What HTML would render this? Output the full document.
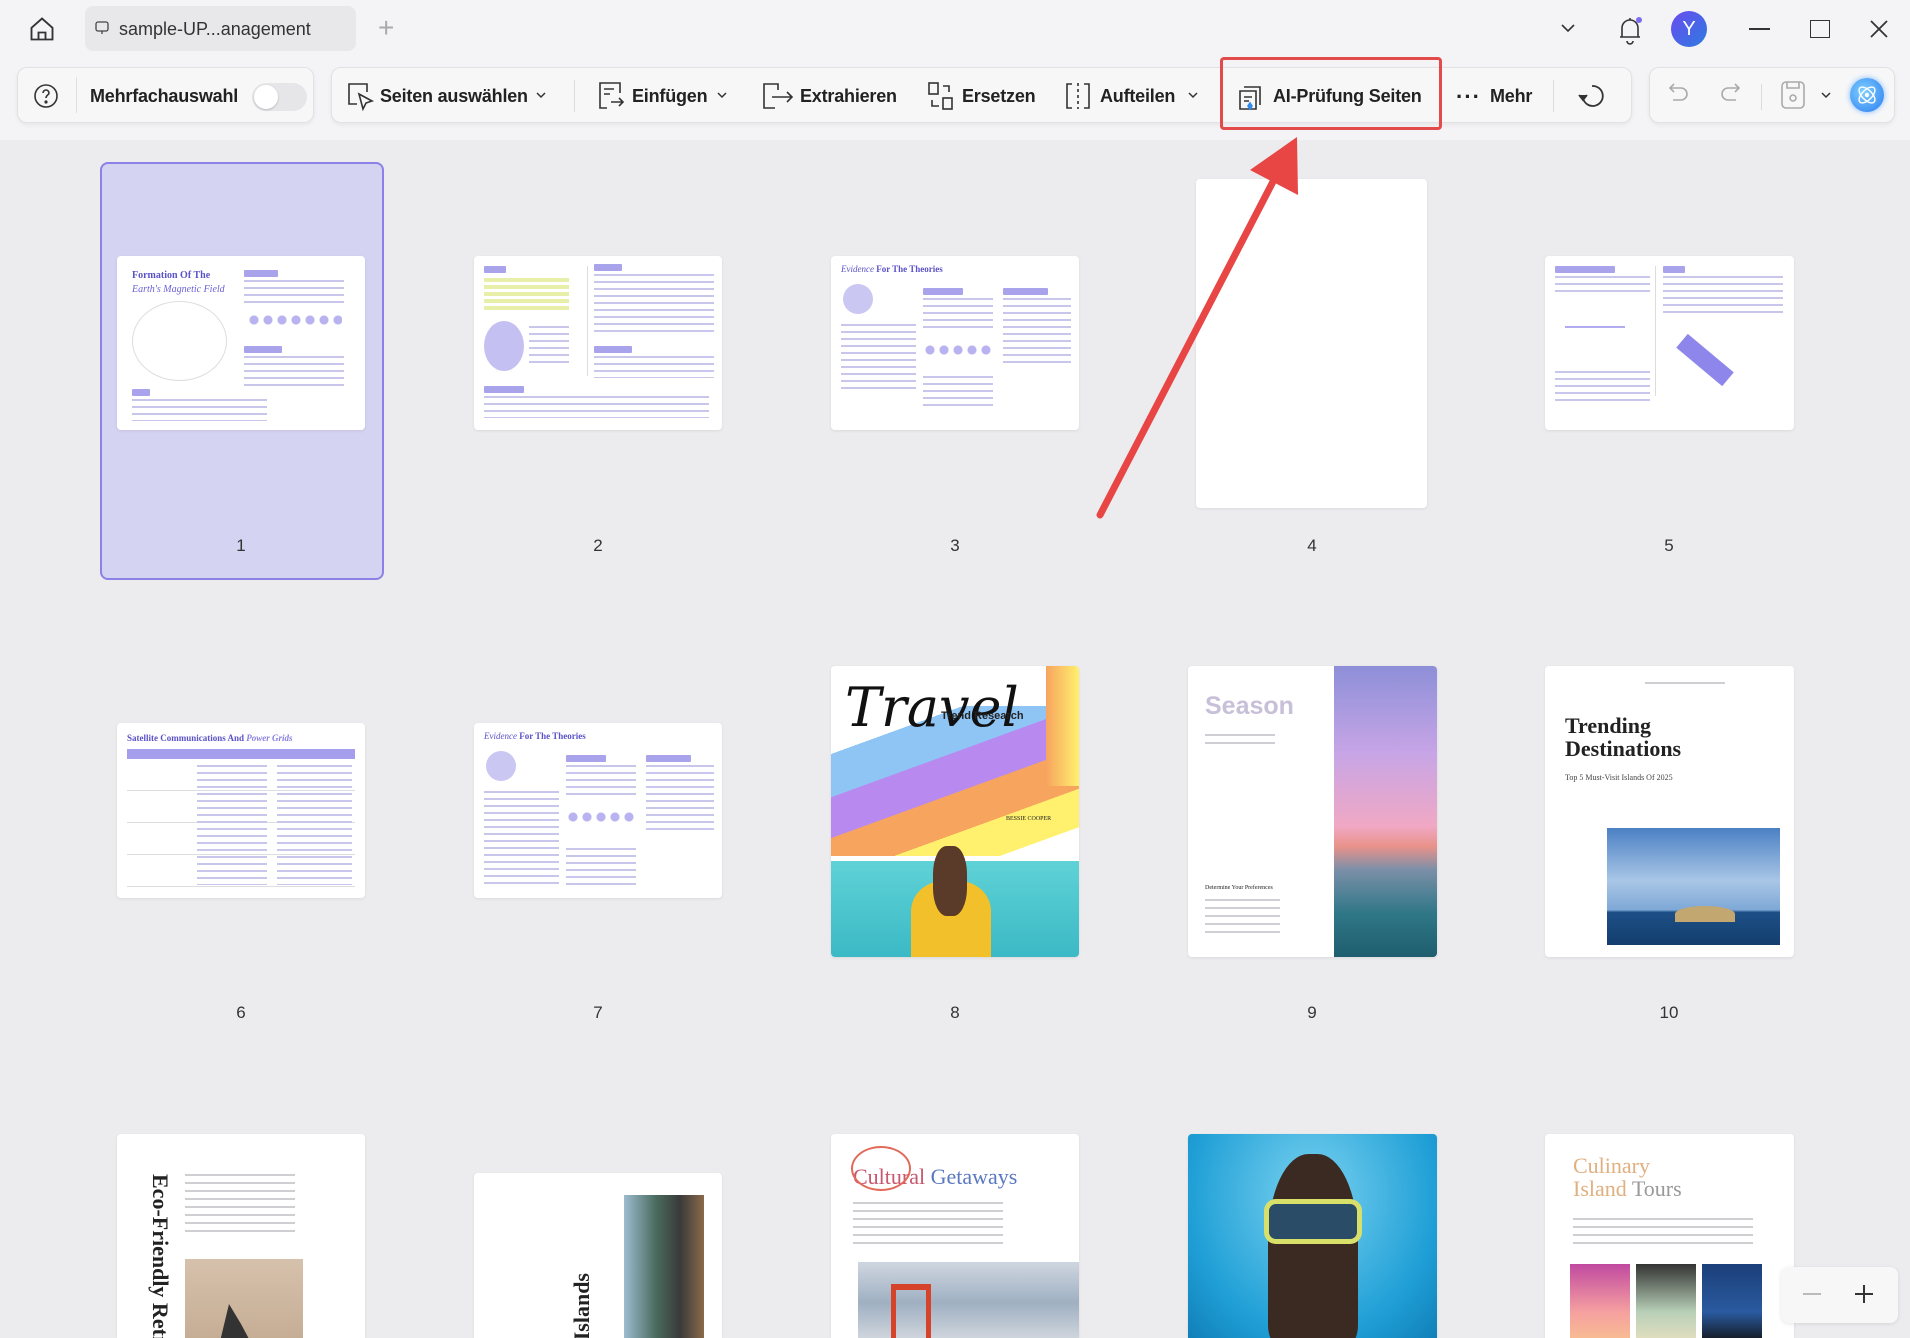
<!DOCTYPE html><html><head><meta charset="utf-8"><style>
*{box-sizing:border-box;margin:0;padding:0}
body{width:1910px;height:1338px;overflow:hidden;background:#ececee;font-family:"Liberation Sans",sans-serif;position:relative;color:#222}
.a{position:absolute}
.tb{position:absolute;top:0;left:0;width:1910px;height:140px;background:#f4f4f6}
.grp{position:absolute;top:67px;height:56px;background:#f7f7f8;border:1px solid #e2e2e5;border-radius:10px;box-shadow:0 2px 4px rgba(0,0,0,.06)}
.t{position:absolute;top:86px;font-size:18px;font-weight:bold;color:#222;white-space:nowrap;letter-spacing:-0.2px}
.ic{position:absolute;top:80px}
.pg{position:absolute;background:#fff;border-radius:4px;box-shadow:0 1px 3px rgba(0,0,0,.08);overflow:hidden}
.lbl{position:absolute;font-size:17px;color:#333;width:60px;text-align:center}
.ln{position:absolute;background:repeating-linear-gradient(#c9c6ec 0 2px,transparent 2px 7px)}
.lg{position:absolute;background:repeating-linear-gradient(#cfcfd3 0 2px,transparent 2px 8px)}
.hd{position:absolute;height:7px;background:#a9a3ec;border-radius:1px}
.se{font-family:"Liberation Serif",serif}
</style></head><body>
<div class="tb"></div>
<svg class="a" style="left:28px;top:15px" width="28" height="28" viewBox="0 0 24 24" fill="none" stroke="#333" stroke-width="1.6"><path d="M3 11L12 3l9 8v10H3z"/><path d="M9 21v-6h6v6"/></svg>
<div class="a" style="left:85px;top:6px;width:271px;height:45px;background:#e8e8eb;border-radius:8px"></div>
<svg class="a" style="left:94px;top:20px" width="16" height="16" viewBox="0 0 16 16" fill="none" stroke="#444" stroke-width="1.3"><rect x="2" y="2" width="12" height="9" rx="2"/><path d="M8 11v3"/></svg>
<div class="a" style="left:119px;top:19px;font-size:18px;color:#333">sample-UP...anagement</div>
<div class="a" style="left:378px;top:12px;font-size:28px;color:#aaa;font-weight:300">+</div>
<svg class="a" style="left:1559px;top:21px" width="18" height="14" viewBox="0 0 18 14" fill="none" stroke="#333" stroke-width="1.6"><path d="M3 4l6 6 6-6"/></svg>
<svg class="a" style="left:1615px;top:14px" width="30" height="32" viewBox="0 0 30 32" fill="none" stroke="#333" stroke-width="1.6"><path d="M7 23V14a8 8 0 0116 0v9zM5 23h20M12 27a3 3 0 006 0M15 4v2"/><circle cx="24" cy="6" r="3" fill="#7b6cf0" stroke="none"/></svg>
<div class="a" style="left:1671px;top:11px;width:36px;height:36px;border-radius:50%;background:linear-gradient(135deg,#6a4cf0,#2d7be0);color:#fff;font-size:20px;text-align:center;line-height:36px">Y</div>
<div class="a" style="left:1749px;top:28px;width:21px;height:2px;background:#333"></div>
<div class="a" style="left:1810px;top:20px;width:20px;height:18px;border:1.8px solid #333"></div>
<svg class="a" style="left:1869px;top:19px" width="20" height="20" viewBox="0 0 20 20" stroke="#333" stroke-width="1.8"><path d="M2 2l16 16M18 2L2 18"/></svg>
<div class="grp" style="left:17px;width:297px"></div>
<div class="grp" style="left:331px;width:1301px"></div>
<div class="grp" style="left:1649px;width:246px"></div>
<svg class="a" style="left:33px;top:83px" width="26" height="26" viewBox="0 0 26 26" fill="none" stroke="#333" stroke-width="1.6"><circle cx="13" cy="13" r="11"/><path d="M10 10a3 3 0 116 0c0 2-3 2-3 5"/><circle cx="13" cy="19" r=".8" fill="#333"/></svg>
<div class="a" style="left:76px;top:77px;width:1px;height:36px;background:#e0e0e3"></div>
<div class="t" style="left:90px">Mehrfachauswahl</div>
<div class="a" style="left:252px;top:83px;width:55px;height:28px;border-radius:14px;background:#e6e6e9"></div>
<div class="a" style="left:254px;top:85px;width:24px;height:24px;border-radius:50%;background:#fff;box-shadow:0 1px 2px rgba(0,0,0,.2)"></div>
<svg class="ic" style="left:345px" width="30" height="32" viewBox="0 0 30 32" fill="none" stroke="#333" stroke-width="1.6"><path d="M12 24H4V4h18v8"/><path d="M14 14l4 15 3-6 6-2z"/></svg>
<div class="t" style="left:380px">Seiten auswählen</div>
<svg class="a" style="left:535px;top:91px" width="12" height="8" viewBox="0 0 12 8" fill="none" stroke="#333" stroke-width="1.5"><path d="M2 2l4 4 4-4"/></svg>
<div class="a" style="left:574px;top:80px;width:1px;height:32px;background:#dcdcdf"></div>
<svg class="ic" style="left:597px" width="30" height="32" viewBox="0 0 30 32" fill="none" stroke="#333" stroke-width="1.6"><path d="M10 28H3V3h20v10M7 9h10M7 14h6"/><path d="M14 22h12M22 18l4 4-4 4"/></svg>
<div class="t" style="left:632px">Einfügen</div>
<svg class="a" style="left:716px;top:91px" width="12" height="8" viewBox="0 0 12 8" fill="none" stroke="#333" stroke-width="1.5"><path d="M2 2l4 4 4-4"/></svg>
<svg class="ic" style="left:761px" width="34" height="32" viewBox="0 0 34 32" fill="none" stroke="#333" stroke-width="1.6"><path d="M14 28H3V4h14v6"/><path d="M11 17h20M26 12l5 5-5 5"/></svg>
<div class="t" style="left:800px">Extrahieren</div>
<svg class="ic" style="left:926px" width="30" height="32" viewBox="0 0 30 32" fill="none" stroke="#333" stroke-width="1.6"><rect x="3" y="3" width="9" height="11"/><rect x="17" y="18" width="9" height="11"/><path d="M17 6h6v6M13 26H6v-6"/></svg>
<div class="t" style="left:962px">Ersetzen</div>
<svg class="ic" style="left:1063px" width="30" height="32" viewBox="0 0 30 32" fill="none" stroke="#333" stroke-width="1.6"><path d="M9 4H4v24h5M21 4h5v24h-5"/><path d="M15 3v26" stroke-dasharray="3 3"/></svg>
<div class="t" style="left:1100px">Aufteilen</div>
<svg class="a" style="left:1187px;top:91px" width="12" height="8" viewBox="0 0 12 8" fill="none" stroke="#333" stroke-width="1.5"><path d="M2 2l4 4 4-4"/></svg>
<svg class="ic" style="left:1236px" width="30" height="32" viewBox="0 0 30 32" fill="none" stroke="#333" stroke-width="1.6"><path d="M8 7h16v18M4 11h16v18H4z"/><path d="M8 17h8M8 21h5"/><path d="M12 26l2-3 2 3-2 3z" fill="#2f8bf0" stroke="#2f8bf0"/></svg>
<div class="t" style="left:1273px">AI-Prüfung Seiten</div>
<div class="a" style="left:1220px;top:57px;width:222px;height:73px;border:3.5px solid #e34b4b;border-radius:4px"></div>
<div class="a" style="left:1456px;top:84px;font-size:22px;font-weight:bold;letter-spacing:1px">···</div>
<div class="t" style="left:1490px">Mehr</div>
<div class="a" style="left:1553px;top:80px;width:1px;height:32px;background:#dcdcdf"></div>
<svg class="ic" style="left:1576px" width="32" height="32" viewBox="0 0 32 32" fill="none" stroke="#333" stroke-width="1.8"><path d="M7 18A10 10 0 1016 6"/><path d="M3 15l4 5 4-5" fill="#333"/></svg>
<svg class="ic" style="left:1665px" width="26" height="28" viewBox="0 0 26 28" fill="none" stroke="#aaa" stroke-width="1.6"><path d="M6 8h10a6 6 0 010 12H8M9 4L5 8l4 4"/></svg>
<svg class="ic" style="left:1718px" width="26" height="28" viewBox="0 0 26 28" fill="none" stroke="#aaa" stroke-width="1.6"><path d="M20 8H10a6 6 0 000 12h8M17 4l4 4-4 4"/></svg>
<div class="a" style="left:1761px;top:84px;width:1px;height:26px;background:#dcdcdf"></div>
<svg class="ic" style="left:1780px" width="26" height="30" viewBox="0 0 26 30" fill="none" stroke="#aaa" stroke-width="1.6"><rect x="2" y="2" width="22" height="26" rx="4"/><path d="M7 2v6h12V2"/><circle cx="13" cy="18" r="3"/></svg>
<svg class="a" style="left:1820px;top:91px" width="12" height="8" viewBox="0 0 12 8" fill="none" stroke="#333" stroke-width="1.5"><path d="M2 2l4 4 4-4"/></svg>
<div class="a" style="left:1850px;top:78px;width:34px;height:34px;border-radius:50%;background:radial-gradient(circle at 40% 40%,#7fd0ff,#2a7cf0);box-shadow:0 0 6px #7ab8ff"></div>
<svg class="a" style="left:1853px;top:81px" width="28" height="28" viewBox="0 0 28 28" fill="none" stroke="#fff" stroke-width="1.4"><ellipse cx="14" cy="14" rx="10" ry="5" transform="rotate(45 14 14)"/><ellipse cx="14" cy="14" rx="10" ry="5" transform="rotate(-45 14 14)"/><circle cx="14" cy="14" r="1.5" fill="#fff"/></svg>

<div class="a" style="left:100px;top:162px;width:284px;height:418px;background:#d5d3f2;border:2px solid #8a82e6;border-radius:8px"></div>

<div class="pg" style="left:117px;top:256px;width:248px;height:174px">
 <div class="a se" style="left:15px;top:14px;font-size:10px;font-weight:bold;color:#5a52c8">Formation Of The</div>
 <div class="a se" style="left:15px;top:28px;font-size:10px;font-style:italic;color:#6a62d8">Earth's Magnetic Field</div>
 <div class="hd" style="left:127px;top:14px;width:34px"></div><div class="ln" style="left:127px;top:24px;width:100px;height:28px"></div>
 <div class="a" style="left:15px;top:45px;width:95px;height:80px;border-radius:50%;border:1px solid #ddd"></div>
 <div class="a" style="left:130px;top:58px;width:95px;height:12px;background:radial-gradient(circle,#b8b2f0 4px,transparent 5px) 0 0/14px 12px"></div>
 <div class="hd" style="left:127px;top:90px;width:38px"></div><div class="ln" style="left:127px;top:100px;width:100px;height:35px"></div>
 <div class="hd" style="left:15px;top:133px;width:18px"></div><div class="ln" style="left:15px;top:143px;width:135px;height:22px"></div>
</div>
<div class="pg" style="left:474px;top:256px;width:248px;height:174px">
 <div class="hd" style="left:10px;top:10px;width:22px"></div>
 <div class="a" style="left:10px;top:22px;width:85px;height:35px;background:repeating-linear-gradient(#e8efa8 0 4px,transparent 4px 7px)"></div>
 <div class="a" style="left:10px;top:65px;width:40px;height:50px;border-radius:50%;background:#c4c0f2"></div>
 <div class="ln" style="left:55px;top:70px;width:40px;height:40px"></div>
 <div class="a" style="left:113px;top:10px;width:1px;height:110px;background:#ddd"></div>
 <div class="hd" style="left:120px;top:8px;width:28px"></div><div class="ln" style="left:120px;top:18px;width:120px;height:60px"></div>
 <div class="hd" style="left:120px;top:90px;width:38px"></div><div class="ln" style="left:120px;top:100px;width:120px;height:22px"></div>
 <div class="hd" style="left:10px;top:130px;width:40px"></div><div class="ln" style="left:10px;top:140px;width:225px;height:22px"></div>
</div>
<div class="pg" style="left:831px;top:256px;width:248px;height:174px">
 <div class="a se" style="left:10px;top:8px;font-size:9px;font-style:italic;color:#5a52c8">Evidence <b style="font-style:normal">For The Theories</b></div>
 <div class="a" style="left:12px;top:28px;width:30px;height:30px;border-radius:50%;background:#cbc7f3"></div>
 <div class="ln" style="left:10px;top:68px;width:75px;height:70px"></div>
 <div class="hd" style="left:92px;top:32px;width:40px"></div><div class="ln" style="left:92px;top:42px;width:70px;height:30px"></div>
 <div class="a" style="left:92px;top:88px;width:70px;height:12px;background:radial-gradient(circle,#b8b2f0 4px,transparent 5px) 0 0/14px 12px"></div>
 <div class="ln" style="left:92px;top:120px;width:70px;height:35px"></div>
 <div class="hd" style="left:172px;top:32px;width:45px"></div><div class="ln" style="left:172px;top:42px;width:68px;height:70px"></div>
</div>
<div class="pg" style="left:1196px;top:179px;width:231px;height:329px"></div>
<div class="pg" style="left:1545px;top:256px;width:249px;height:174px">
 <div class="hd" style="left:10px;top:10px;width:60px"></div><div class="ln" style="left:10px;top:20px;width:95px;height:20px"></div>
 <div class="a" style="left:20px;top:70px;width:60px;height:35px;border-top:2px solid #b1abf0"></div>
 <div class="ln" style="left:10px;top:115px;width:95px;height:30px"></div>
 <div class="a" style="left:110px;top:10px;width:1px;height:130px;background:#ddd"></div>
 <div class="hd" style="left:118px;top:10px;width:22px"></div><div class="ln" style="left:118px;top:20px;width:120px;height:40px"></div>
 <div class="a" style="left:130px;top:95px;width:60px;height:18px;background:#8e86ea;transform:rotate(40deg)"></div>
</div>
<div class="lbl" style="left:211px;top:536px">1</div><div class="lbl" style="left:568px;top:536px">2</div><div class="lbl" style="left:925px;top:536px">3</div><div class="lbl" style="left:1282px;top:536px">4</div><div class="lbl" style="left:1639px;top:536px">5</div>

<div class="pg" style="left:117px;top:723px;width:248px;height:175px">
 <div class="a se" style="left:10px;top:10px;font-size:9px;font-weight:bold;color:#5a52c8">Satellite Communications And <i style="color:#8880e0">Power Grids</i></div>
 <div class="a" style="left:10px;top:26px;width:228px;height:10px;background:#a59eec"></div>
 <div class="a" style="left:10px;top:36px;width:228px;height:130px;background:repeating-linear-gradient(#fff 0 31px,#ddd 31px 32px)"></div>
 <div class="ln" style="left:80px;top:42px;width:70px;height:120px"></div><div class="ln" style="left:160px;top:42px;width:75px;height:120px"></div>
</div>
<div class="pg" style="left:474px;top:723px;width:248px;height:175px">
 <div class="a se" style="left:10px;top:8px;font-size:9px;font-style:italic;color:#5a52c8">Evidence <b style="font-style:normal">For The Theories</b></div>
 <div class="a" style="left:12px;top:28px;width:30px;height:30px;border-radius:50%;background:#cbc7f3"></div>
 <div class="ln" style="left:10px;top:68px;width:75px;height:95px"></div>
 <div class="hd" style="left:92px;top:32px;width:40px"></div><div class="ln" style="left:92px;top:42px;width:70px;height:30px"></div>
 <div class="a" style="left:92px;top:88px;width:70px;height:12px;background:radial-gradient(circle,#b8b2f0 4px,transparent 5px) 0 0/14px 12px"></div>
 <div class="ln" style="left:92px;top:125px;width:70px;height:40px"></div>
 <div class="hd" style="left:172px;top:32px;width:45px"></div><div class="ln" style="left:172px;top:42px;width:68px;height:70px"></div>
</div>
<div class="pg" style="left:831px;top:666px;width:248px;height:291px;background:#fff">
 <div class="a" style="left:0;top:40px;width:248px;height:150px;background:linear-gradient(160deg,transparent 20%,#8ec5f5 20% 38%,#b88af0 38% 55%,#f7a45e 55% 72%,#fff06e 72% 88%,transparent 88%)"></div>
 <div class="a" style="left:215px;top:0;width:33px;height:120px;background:linear-gradient(90deg,#f7a45e,#fff06e)"></div>
 <div class="a" style="left:14px;top:10px;font-family:'DejaVu Serif',serif;font-style:italic;font-size:54px;color:#111">Travel</div>
 <div class="a" style="left:110px;top:44px;font-size:11px;font-weight:bold">Trend Research</div>
 <div class="a se" style="left:175px;top:150px;font-size:6px">BESSIE COOPER</div>
 <div class="a" style="left:0;top:195px;width:248px;height:96px;background:linear-gradient(#5fd2d6,#3bb9c5)"></div>
 <div class="a" style="left:80px;top:215px;width:80px;height:76px;background:#f2c02a;border-radius:40% 40% 0 0"></div>
 <div class="a" style="left:102px;top:180px;width:34px;height:70px;background:#5a3a28;border-radius:40%"></div>
</div>
<div class="pg" style="left:1188px;top:666px;width:249px;height:291px">
 <div class="a" style="left:17px;top:26px;font-size:25px;font-weight:bold;color:#c8bfd8">Season</div>
 <div class="lg" style="left:17px;top:68px;width:70px;height:12px"></div>
 <div class="a se" style="left:17px;top:219px;font-size:6px">Determine Your Preferences</div>
 <div class="lg" style="left:17px;top:233px;width:75px;height:36px"></div>
 <div class="a" style="left:146px;top:0;width:103px;height:291px;background:linear-gradient(#8d8fd8 0%,#c7a5e6 30%,#f0a8c4 55%,#e9928a 62%,#7b8fa8 70%,#2f7787 85%,#1f5e6e)"></div>
</div>
<div class="pg" style="left:1545px;top:666px;width:249px;height:291px">
 <div class="lg" style="left:100px;top:16px;width:80px;height:3px"></div>
 <div class="a se" style="left:20px;top:48px;font-size:22px;font-weight:bold;line-height:23px">Trending<br>Destinations</div>
 <div class="a se" style="left:20px;top:107px;font-size:8px;color:#444">Top 5 Must-Visit Islands Of 2025</div>
 <div class="a" style="left:62px;top:162px;width:173px;height:117px;background:linear-gradient(#4b80c4,#a9c6e6 45%,#7ea8d6 70%,#1d4f86 72%,#133e6e)"></div>
 <div class="a" style="left:130px;top:240px;width:60px;height:16px;background:#c3a770;border-radius:50% 50% 0 0"></div>
</div>
<div class="lbl" style="left:211px;top:1003px">6</div><div class="lbl" style="left:568px;top:1003px">7</div><div class="lbl" style="left:925px;top:1003px">8</div><div class="lbl" style="left:1282px;top:1003px">9</div><div class="lbl" style="left:1639px;top:1003px">10</div>

<div class="pg" style="left:117px;top:1134px;width:248px;height:204px;border-radius:4px 4px 0 0">
 <div class="a se" style="left:30px;top:40px;font-size:22px;font-weight:bold;writing-mode:vertical-rl;white-space:nowrap">Eco-Friendly Retreats</div>
 <div class="lg" style="left:68px;top:40px;width:110px;height:60px"></div>
 <div class="a" style="left:68px;top:125px;width:118px;height:90px;background:linear-gradient(#d6c1ac,#c4ab92)"></div>
 <div class="a" style="left:100px;top:170px;width:40px;height:50px;background:#333;clip-path:polygon(0 100%,30% 0,60% 40%,100% 100%)"></div>
</div>
<div class="pg" style="left:474px;top:1173px;width:248px;height:165px;border-radius:4px 4px 0 0">
 <div class="a se" style="left:95px;top:100px;font-size:22px;font-weight:bold;writing-mode:vertical-rl;transform:rotate(180deg);white-space:nowrap">Adventure Islands</div>
 <div class="a" style="left:150px;top:22px;width:80px;height:150px;background:linear-gradient(90deg,#9dbcd1,#4a6b5e 40%,#3a3a3a 70%,#8a6a4a)"></div>
</div>
<div class="pg" style="left:831px;top:1134px;width:248px;height:204px;border-radius:4px 4px 0 0">
 <div class="a se" style="left:22px;top:30px;font-size:22px;color:#c8566c">Cultural <span style="color:#5a78c0">Getaways</span></div>
 <div class="a" style="left:20px;top:12px;width:60px;height:45px;border:2px solid #e26a5a;border-radius:50%"></div>
 <div class="lg" style="left:22px;top:68px;width:150px;height:42px"></div>
 <div class="a" style="left:27px;top:128px;width:221px;height:82px;background:linear-gradient(#cfd6e0,#9fb0c2 50%,#d7dbe1)"></div>
 <div class="a" style="left:60px;top:150px;width:40px;height:60px;border-top:6px solid #d4432a;border-left:5px solid #d4432a;border-right:5px solid #d4432a"></div>
</div>
<div class="pg" style="left:1188px;top:1134px;width:249px;height:204px;border-radius:4px 4px 0 0;background:radial-gradient(ellipse at 50% 30%,#7ad2f0,#1f9fd6 70%,#117fb8)">
 <div class="a" style="left:80px;top:20px;width:90px;height:190px;background:#3b2a22;border-radius:45% 45% 10% 10%"></div>
 <div class="a" style="left:76px;top:65px;width:98px;height:45px;border:5px solid #d8e06a;border-radius:12px;background:#2a4c66"></div>
</div>
<div class="pg" style="left:1545px;top:1134px;width:249px;height:204px;border-radius:4px 4px 0 0">
 <div class="a se" style="left:28px;top:20px;font-size:22px;color:#e0b080;line-height:23px">Culinary<br>Island <span style="color:#999">Tours</span></div>
 <div class="lg" style="left:28px;top:84px;width:180px;height:30px"></div>
 <div class="a" style="left:25px;top:130px;width:60px;height:80px;background:linear-gradient(#c04aa0,#f6a0a0 60%,#f8c090)"></div>
 <div class="a" style="left:91px;top:130px;width:60px;height:80px;background:linear-gradient(#333,#b8d0b8 60%,#e8e0c0)"></div>
 <div class="a" style="left:157px;top:130px;width:60px;height:80px;background:linear-gradient(#1b3f78,#2a5aa0 60%,#111)"></div>
</div>
<div class="a" style="left:1781px;top:1267px;width:117px;height:56px;background:#f7f7f8;border-radius:8px;box-shadow:0 1px 4px rgba(0,0,0,.1)"></div>
<div class="a" style="left:1803px;top:1293px;width:18px;height:2px;background:#bbb"></div>
<div class="a" style="left:1855px;top:1293px;width:18px;height:2px;background:#333"></div>
<div class="a" style="left:1863px;top:1285px;width:2px;height:18px;background:#333"></div>
<svg class="a" style="left:0;top:0" width="1910" height="1338"><line x1="1100" y1="515" x2="1278" y2="172" stroke="#e84545" stroke-width="7" stroke-linecap="round"/><polygon points="1297,137 1298,195 1250,170" fill="#e84545"/></svg>
</body></html>
